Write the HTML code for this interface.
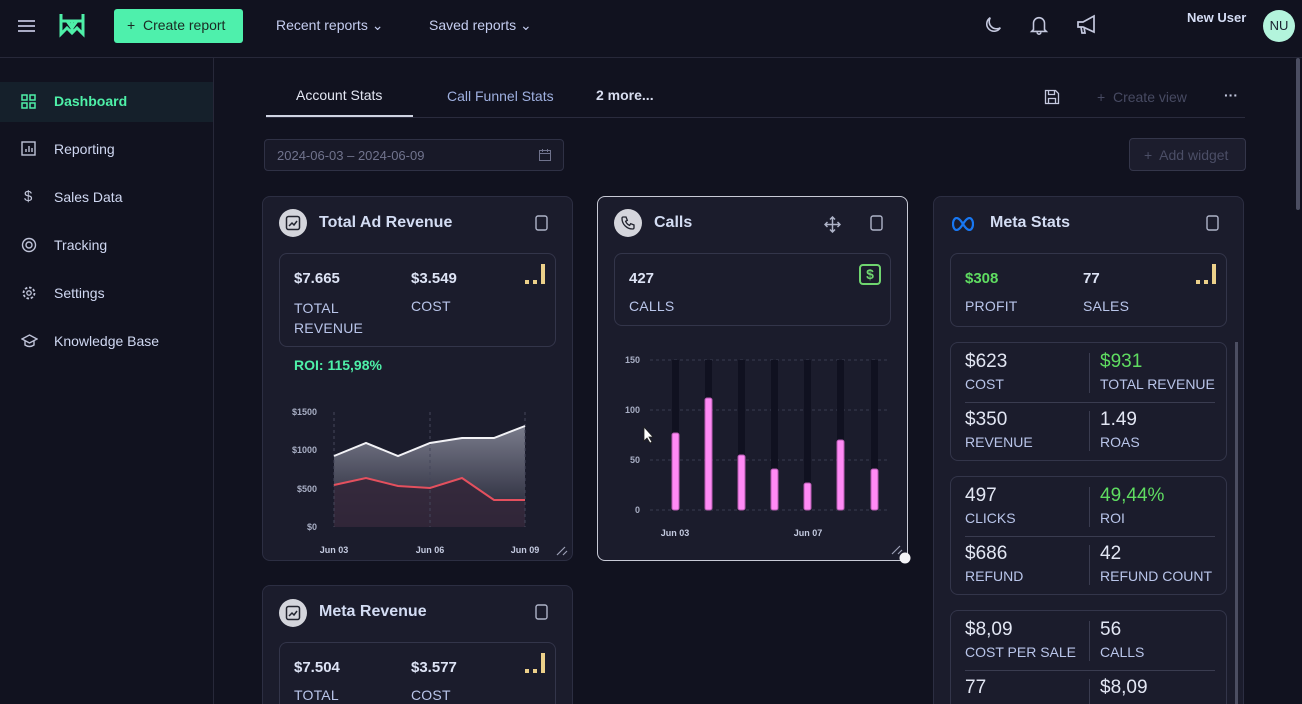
<!DOCTYPE html>
<html style="overflow:hidden;height:704px"><head><meta charset="utf-8"><style>
*{box-sizing:border-box;margin:0;padding:0}
body{width:1302px;height:704px;overflow:hidden;background:#11121f;font-family:"Liberation Sans",sans-serif;color:#c9d3ee;position:relative}
.a{position:absolute}
.t{position:absolute;white-space:nowrap}
.card{position:absolute;background:#1b1c2c;border:1px solid #2c2e42;border-radius:8px}
.box{position:absolute;border:1px solid #33354a;border-radius:8px;background:#1b1c2c}
.b{font-weight:bold}
.lbl{font-size:14px;color:#b9c5ea;letter-spacing:.2px}
.val{font-size:15px;font-weight:bold;color:#dde3f5}
.icirc{position:absolute;width:28px;height:28px;border-radius:50%;background:#d4d5dc}
.ttl{font-size:16px;font-weight:bold;color:#d3dcf3}
.big{font-size:19px;color:#e2e6f3}
.sl{font-size:14px;color:#b9c5ea}
</style></head><body>
<div class="a" style="left:0;top:57px;width:1302px;height:1px;background:#272839"></div>
<svg class="a" style="left:17px;top:18px" width="20" height="16"><path d="M1 3h17M1 8h17M1 13h17" stroke="#a9abc4" stroke-width="2"/></svg>
<svg class="a" style="left:59px;top:12px" width="26" height="26" viewBox="0 0 26 26"><path d="M2 2v20l6-6 5 5 5-5 6 6V2M2 9h22M13 9v12M8 9l5 7 5-7" stroke="#4ef0a8" stroke-width="3" fill="none"/></svg>
<div class="a" style="left:114px;top:9px;width:129px;height:34px;background:#4ef0ac;border-radius:3px"></div>
<div class="t" style="left:127px;top:17px;font-size:14px;color:#1b2a23">+&nbsp; Create report</div>
<div class="t" style="left:276px;top:17px;font-size:14px;color:#c5cdf0">Recent reports ⌄</div>
<div class="t" style="left:429px;top:17px;font-size:14px;color:#c5cdf0">Saved reports ⌄</div>
<svg class="a" style="left:982px;top:14px" width="22" height="22" viewBox="0 0 24 24"><path d="M20 15A8 8 0 0 1 9 4a8 8 0 1 0 11 11z" stroke="#c4c8de" stroke-width="1.7" fill="none"/></svg>
<svg class="a" style="left:1028px;top:13px" width="22" height="24" viewBox="0 0 24 24"><path d="M6 17V10a6 6 0 0 1 12 0v7l2 2H4zM10 20a2 2 0 0 0 4 0" stroke="#c4c8de" stroke-width="1.7" fill="none"/></svg>
<svg class="a" style="left:1075px;top:14px" width="24" height="22" viewBox="0 0 24 22"><path d="M3 8h5l11-6v16L8 13H3zM6 13l1 6h3l-1-6" stroke="#c4c8de" stroke-width="1.7" fill="none"/></svg>
<div class="t b" style="left:1187px;top:10px;font-size:13px;color:#d5ddf5">New User</div>
<div class="a" style="left:1263px;top:10px;width:32px;height:32px;border-radius:50%;background:#b3f4dc;color:#1a2130;font-size:13px;text-align:center;line-height:32px">NU</div>
<div class="a" style="left:213px;top:58px;width:1px;height:646px;background:#272839"></div>
<div class="a" style="left:0;top:82px;width:213px;height:40px;background:#15202b"></div>
<svg class="a" style="left:21px;top:94px" width="16" height="16"><path d="M1 1h5v5H1zM9 1h5v5H9zM1 9h5v5H1zM9 9h5v5H9z" stroke="#4ef0a8" stroke-width="1.5" fill="none"/></svg>
<div class="t b" style="left:54px;top:93px;font-size:14px;color:#4ef0a8">Dashboard</div>
<svg class="a" style="left:21px;top:141px" width="16" height="16"><rect x="1" y="1" width="13" height="13" stroke="#bfc3d8" stroke-width="1.4" fill="none"/><path d="M5 11V8M8 11V5M11 11V7" stroke="#bfc3d8" stroke-width="1.4"/></svg>
<div class="t" style="left:54px;top:141px;font-size:14px;color:#d0d8f2">Reporting</div>
<div class="t" style="left:24px;top:188px;font-size:15px;color:#c4c8dc">$</div>
<div class="t" style="left:54px;top:189px;font-size:14px;color:#d0d8f2">Sales Data</div>
<svg class="a" style="left:21px;top:237px" width="16" height="16"><circle cx="8" cy="8" r="6.5" stroke="#bfc3d8" stroke-width="1.4" fill="none"/><circle cx="8" cy="8" r="3" stroke="#bfc3d8" stroke-width="1.4" fill="none"/></svg>
<div class="t" style="left:54px;top:237px;font-size:14px;color:#d0d8f2">Tracking</div>
<svg class="a" style="left:21px;top:285px" width="16" height="16"><circle cx="8" cy="8" r="5.5" stroke="#bfc3d8" stroke-width="1.8" stroke-dasharray="2.5 1.8" fill="none"/><circle cx="8" cy="8" r="2.2" stroke="#bfc3d8" stroke-width="1.3" fill="none"/></svg>
<div class="t" style="left:54px;top:285px;font-size:14px;color:#d0d8f2">Settings</div>
<svg class="a" style="left:21px;top:333px" width="17" height="16"><path d="M1 6l7.5-4L16 6l-7.5 4zM4 8v4c3 2 6 2 9 0V8" stroke="#bfc3d8" stroke-width="1.4" fill="none"/></svg>
<div class="t" style="left:54px;top:333px;font-size:14px;color:#d0d8f2">Knowledge Base</div>
<div class="a" style="left:266px;top:117px;width:979px;height:1px;background:#2a2b3d"></div>
<div class="a" style="left:266px;top:115px;width:147px;height:2px;background:#cfd3e2"></div>
<div class="t" style="left:296px;top:87px;font-size:14px;color:#e4e7f3">Account Stats</div>
<div class="t" style="left:447px;top:88px;font-size:14px;color:#9fb0e0">Call Funnel Stats</div>
<div class="t b" style="left:596px;top:87px;font-size:14px;color:#d8ddef">2 more...</div>
<svg class="a" style="left:1044px;top:89px" width="16" height="16"><path d="M1.5 1.5h10l3 3v10h-13zM4.5 1.5v4h6v-4M4.5 14.5v-5h7v5" stroke="#c4c8de" stroke-width="1.3" fill="none"/></svg>
<div class="t" style="left:1097px;top:89px;font-size:14px;color:#474a62">+&nbsp; Create view</div>
<div class="t b" style="left:1224px;top:87px;font-size:14px;color:#c4c8de">···</div>
<div class="a" style="left:264px;top:139px;width:300px;height:32px;border:1px solid #2f3145;border-radius:4px;background:#181928"></div>
<div class="t" style="left:277px;top:148px;font-size:13px;color:#70738d">2024-06-03 – 2024-06-09</div>
<svg class="a" style="left:538px;top:148px" width="14" height="14"><rect x="1.5" y="2.5" width="11" height="10" stroke="#70738d" fill="none"/><path d="M1.5 5.5h11M4.5 1v3M9.5 1v3" stroke="#70738d"/></svg>
<div class="a" style="left:1129px;top:138px;width:117px;height:33px;border:1px solid #34364a;border-radius:4px;background:#1c1d2d"></div>
<div class="t" style="left:1144px;top:147px;font-size:14px;color:#4b4e66">+&nbsp; Add widget</div>
<div class="a" style="left:1296px;top:58px;width:4px;height:152px;background:#4c4e62;border-radius:2px"></div>

<div class="card" style="left:262px;top:196px;width:311px;height:365px"></div>
<div class="icirc" style="left:279px;top:209px"></div>
<svg class="a" style="left:285px;top:215px" width="16" height="16"><rect x="1.5" y="1.5" width="13" height="13" rx="2" stroke="#22242f" stroke-width="1.5" fill="none"/><path d="M4 11l3-3 2 2 3-4" stroke="#22242f" stroke-width="1.5" fill="none"/></svg>
<div class="t ttl" style="left:319px;top:214px">Total Ad Revenue</div>
<svg class="a" style="left:535px;top:215px" width="14" height="17"><rect x="1" y="1" width="11" height="14" rx="2" stroke="#aeb3c8" stroke-width="1.4" fill="none"/></svg>
<div class="box" style="left:279px;top:253px;width:277px;height:94px"></div>
<div class="t val" style="left:294px;top:270px">$7.665</div>
<div class="t val" style="left:411px;top:270px">$3.549</div>
<div class="t lbl" style="left:294px;top:298px;line-height:20px">TOTAL<br>REVENUE</div>
<div class="t lbl" style="left:411px;top:298px">COST</div>
<svg class="a" style="left:524px;top:263px" width="22" height="22"><rect x="1" y="17" width="4" height="4" fill="#ecd08a"/><rect x="9" y="17" width="4" height="4" fill="#ecd08a"/><rect x="17" y="1" width="4" height="20" fill="#ecd08a"/></svg>
<div class="t b" style="left:294px;top:357px;font-size:14px;color:#4ef0a8">ROI: 115,98%</div>
<svg class="a" style="left:262px;top:396px" width="311" height="165">
<defs><linearGradient id="g1" x1="0" y1="0" x2="0" y2="1"><stop offset="0" stop-color="#8a8c9c"/><stop offset="1" stop-color="#1c1d2e"/></linearGradient></defs>
<g font-family="Liberation Sans" font-size="9" font-weight="bold" fill="#a8aec4" text-anchor="end">
<text x="55" y="19">$1500</text><text x="55" y="57">$1000</text><text x="55" y="96">$500</text><text x="55" y="134">$0</text></g>
<path d="M72 60L104 47L136 60L168 47L200 42L232 42L263 30V131H72Z" fill="url(#g1)" opacity=".85"/>
<path d="M72 89L104 82L136 90L168 92L200 82L232 104L263 104V131H72Z" fill="#33273a" opacity=".9"/>
<path d="M72 16V131M168 16V131M263 16V131" stroke="#44465a" stroke-dasharray="3 3"/>
<path d="M72 60L104 47L136 60L168 47L200 42L232 42L263 30" stroke="#f2f2f6" stroke-width="2" fill="none"/>
<path d="M72 89L104 82L136 90L168 92L200 82L232 104L263 104" stroke="#e4505e" stroke-width="2" fill="none"/>
<g font-family="Liberation Sans" font-size="9" font-weight="bold" fill="#c4cae0" text-anchor="middle"><text x="72" y="157">Jun 03</text><text x="168" y="157">Jun 06</text><text x="263" y="157">Jun 09</text></g>
<path d="M295 159l8-8M301 159l4-4" stroke="#9ca0b6" stroke-width="1.2"/>
</svg>

<div class="card" style="left:597px;top:196px;width:311px;height:365px;border-color:#c8cad6"></div>
<div class="icirc" style="left:614px;top:209px"></div>
<svg class="a" style="left:620px;top:215px" width="16" height="16" viewBox="0 0 24 24"><path d="M5 3h4l2 5-2.5 1.5a11 11 0 0 0 6 6L16 13l5 2v4a2 2 0 0 1-2 2A16 16 0 0 1 3 5a2 2 0 0 1 2-2z" stroke="#22242f" stroke-width="2" fill="none"/></svg>
<div class="t ttl" style="left:654px;top:214px">Calls</div>
<svg class="a" style="left:824px;top:216px" width="17" height="17" viewBox="0 0 17 17"><path d="M8.5 1v15M1 8.5h15M6 3.5l2.5-2.5 2.5 2.5M6 13.5l2.5 2.5 2.5-2.5M3.5 6L1 8.5l2.5 2.5M13.5 6l2.5 2.5-2.5 2.5" stroke="#aeb3c8" stroke-width="1.5" fill="none"/></svg>
<svg class="a" style="left:870px;top:215px" width="14" height="17"><rect x="1" y="1" width="11" height="14" rx="2" stroke="#aeb3c8" stroke-width="1.4" fill="none"/></svg>
<div class="box" style="left:614px;top:253px;width:277px;height:73px"></div>
<div class="t val" style="left:629px;top:270px">427</div>
<div class="t lbl" style="left:629px;top:298px">CALLS</div>
<div class="a" style="left:859px;top:264px;width:22px;height:21px;border:2px solid #6fd56f;border-radius:4px;color:#6fd56f;font-size:14px;font-weight:bold;text-align:center;line-height:17px">$</div>
<svg class="a" style="left:597px;top:340px" width="315" height="225">
<g font-family="Liberation Sans" font-size="9" font-weight="bold" fill="#a8aec4" text-anchor="end"><text x="43" y="23">150</text><text x="43" y="73">100</text><text x="43" y="123">50</text><text x="43" y="173">0</text></g>
<path d="M53 20H293M53 70H293M53 120H293M53 170H293" stroke="#3a3c50" stroke-dasharray="3 3"/>
<g fill="#101120"><rect x="75" y="20" width="7" height="150"/><rect x="108" y="20" width="7" height="150"/><rect x="141" y="20" width="7" height="150"/><rect x="174" y="20" width="7" height="150"/><rect x="207" y="20" width="7" height="150"/><rect x="240" y="20" width="7" height="150"/><rect x="274" y="20" width="7" height="150"/></g>
<g fill="#ff8af5" stroke="#b45bb0" stroke-width="1"><rect x="75" y="93" width="7" height="77" rx="2"/><rect x="108" y="58" width="7" height="112" rx="2"/><rect x="141" y="115" width="7" height="55" rx="2"/><rect x="174" y="129" width="7" height="41" rx="2"/><rect x="207" y="143" width="7" height="27" rx="2"/><rect x="240" y="100" width="7" height="70" rx="2"/><rect x="274" y="129" width="7" height="41" rx="2"/></g>
<g font-family="Liberation Sans" font-size="9" font-weight="bold" fill="#c4cae0" text-anchor="middle"><text x="78" y="196">Jun 03</text><text x="211" y="196">Jun 07</text></g>
<path d="M295 214l8-8M301 214l4-4" stroke="#9ca0b6" stroke-width="1.2"/>
<circle cx="308" cy="218" r="5.5" fill="#f4f4f8"/>
<path d="M47 87v14l3-3 3 5 2-1-3-5h4z" fill="#fff" stroke="#222" stroke-width=".8"/>
</svg>

<div class="card" style="left:933px;top:196px;width:311px;height:508px;border-bottom:none;border-radius:8px 8px 0 0"></div>
<svg class="a" style="left:952px;top:217px" width="22" height="14" viewBox="0 0 22 14"><path d="M11 7C8 2 6 1 4.5 1S1 3 1 7s2 6 3.5 6S8 12 11 7s5-6 6.5-6S21 3 21 7s-2 6-3.5 6S14 12 11 7z" stroke="#1877f2" stroke-width="2.2" fill="none"/></svg>
<div class="t ttl" style="left:990px;top:214px">Meta Stats</div>
<svg class="a" style="left:1206px;top:215px" width="14" height="17"><rect x="1" y="1" width="11" height="14" rx="2" stroke="#aeb3c8" stroke-width="1.4" fill="none"/></svg>
<div class="box" style="left:950px;top:253px;width:277px;height:74px"></div>
<div class="t val" style="left:965px;top:270px;color:#5fdc61">$308</div>
<div class="t val" style="left:1083px;top:270px">77</div>
<div class="t lbl" style="left:965px;top:298px">PROFIT</div>
<div class="t lbl" style="left:1083px;top:298px">SALES</div>
<svg class="a" style="left:1195px;top:263px" width="22" height="22"><rect x="1" y="17" width="4" height="4" fill="#ecd08a"/><rect x="9" y="17" width="4" height="4" fill="#ecd08a"/><rect x="17" y="1" width="4" height="20" fill="#ecd08a"/></svg>
<div class="a" style="left:1235px;top:342px;width:3px;height:362px;background:#4c4e62"></div>

<div class="box" style="left:950px;top:342px;width:277px;height:119px"></div>
<div class="a" style="left:1089px;top:353px;width:1px;height:40px;background:#3a3c50"></div>
<div class="a" style="left:965px;top:402px;width:250px;height:1px;background:#3a3c50"></div>
<div class="a" style="left:1089px;top:411px;width:1px;height:40px;background:#3a3c50"></div>
<div class="t big" style="left:965px;top:351px">$623</div><div class="t sl" style="left:965px;top:376px">COST</div>
<div class="t big" style="left:1100px;top:351px;color:#5fdc61">$931</div><div class="t sl" style="left:1100px;top:376px">TOTAL REVENUE</div>
<div class="t big" style="left:965px;top:409px">$350</div><div class="t sl" style="left:965px;top:434px">REVENUE</div>
<div class="t big" style="left:1100px;top:409px">1.49</div><div class="t sl" style="left:1100px;top:434px">ROAS</div>

<div class="box" style="left:950px;top:476px;width:277px;height:119px"></div>
<div class="a" style="left:1089px;top:487px;width:1px;height:40px;background:#3a3c50"></div>
<div class="a" style="left:965px;top:536px;width:250px;height:1px;background:#3a3c50"></div>
<div class="a" style="left:1089px;top:545px;width:1px;height:40px;background:#3a3c50"></div>
<div class="t big" style="left:965px;top:485px">497</div><div class="t sl" style="left:965px;top:510px">CLICKS</div>
<div class="t big" style="left:1100px;top:485px;color:#5fdc61">49,44%</div><div class="t sl" style="left:1100px;top:510px">ROI</div>
<div class="t big" style="left:965px;top:543px">$686</div><div class="t sl" style="left:965px;top:568px">REFUND</div>
<div class="t big" style="left:1100px;top:543px">42</div><div class="t sl" style="left:1100px;top:568px">REFUND COUNT</div>

<div class="box" style="left:950px;top:610px;width:277px;height:94px;border-bottom:none;border-radius:8px 8px 0 0"></div>
<div class="a" style="left:1089px;top:621px;width:1px;height:40px;background:#3a3c50"></div>
<div class="a" style="left:965px;top:670px;width:250px;height:1px;background:#3a3c50"></div>
<div class="a" style="left:1089px;top:679px;width:1px;height:25px;background:#3a3c50"></div>
<div class="t big" style="left:965px;top:619px">$8,09</div><div class="t sl" style="left:965px;top:644px">COST PER SALE</div>
<div class="t big" style="left:1100px;top:619px">56</div><div class="t sl" style="left:1100px;top:644px">CALLS</div>
<div class="t big" style="left:965px;top:677px">77</div>
<div class="t big" style="left:1100px;top:677px">$8,09</div>

<div class="card" style="left:262px;top:585px;width:311px;height:119px;border-bottom:none;border-radius:8px 8px 0 0"></div>
<div class="icirc" style="left:279px;top:599px"></div>
<svg class="a" style="left:285px;top:605px" width="16" height="16"><rect x="1.5" y="1.5" width="13" height="13" rx="2" stroke="#22242f" stroke-width="1.5" fill="none"/><path d="M4 11l3-3 2 2 3-4" stroke="#22242f" stroke-width="1.5" fill="none"/></svg>
<div class="t ttl" style="left:319px;top:603px">Meta Revenue</div>
<svg class="a" style="left:535px;top:604px" width="14" height="17"><rect x="1" y="1" width="11" height="14" rx="2" stroke="#aeb3c8" stroke-width="1.4" fill="none"/></svg>
<div class="box" style="left:279px;top:642px;width:277px;height:62px;border-bottom:none;border-radius:8px 8px 0 0"></div>
<div class="t val" style="left:294px;top:659px">$7.504</div>
<div class="t val" style="left:411px;top:659px">$3.577</div>
<div class="t lbl" style="left:294px;top:687px">TOTAL</div>
<div class="t lbl" style="left:411px;top:687px">COST</div>
<svg class="a" style="left:524px;top:652px" width="22" height="22"><rect x="1" y="17" width="4" height="4" fill="#ecd08a"/><rect x="9" y="17" width="4" height="4" fill="#ecd08a"/><rect x="17" y="1" width="4" height="20" fill="#ecd08a"/></svg>
</body></html>
